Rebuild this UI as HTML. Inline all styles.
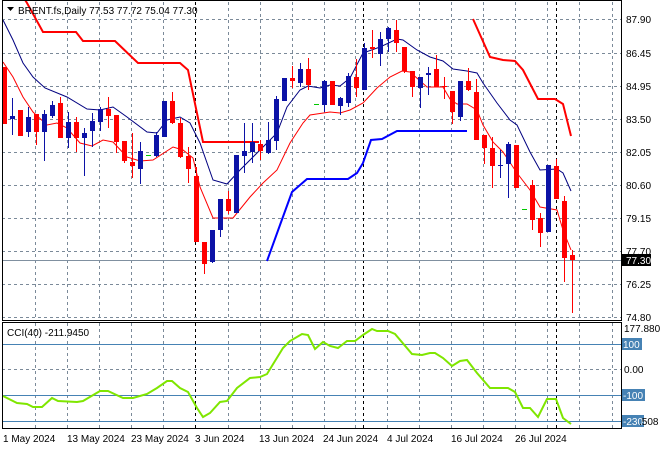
<!DOCTYPE html>
<html><head><meta charset="utf-8"><style>
html,body{margin:0;padding:0;background:#fff;width:660px;height:450px;overflow:hidden}
svg{display:block}
text{font-family:"Liberation Sans",sans-serif;font-size:10px;fill:#000}
</style></head><body>
<svg width="660" height="450" viewBox="0 0 660 450" xmlns="http://www.w3.org/2000/svg">
<rect width="660" height="450" fill="#fff"/>
<!-- grid -->
<g stroke="#7b8a99" stroke-width="1" stroke-dasharray="3,3" fill="none">
<path d="M2 19.5H621M2 53.5H621M2 86.5H621M2 119.5H621M2 152.5H621M2 185.5H621M2 218.5H621M2 251.5H621M2 284.5H621M2 317.5H621M2 369.5H621"/>
<path d="M35.5 2V320M67.5 2V320M99.5 2V320M131.5 2V320M163.5 2V320M228.5 2V320M260.5 2V320M292.5 2V320M324.5 2V320M355.5 2V320M387.5 2V320M419.5 2V320M451.5 2V320M483.5 2V320M515.5 2V320M547.5 2V320M579.5 2V320M612.5 2V320"/>
<path d="M35.5 323V428M67.5 323V428M99.5 323V428M131.5 323V428M163.5 323V428M228.5 323V428M260.5 323V428M292.5 323V428M324.5 323V428M355.5 323V428M387.5 323V428M419.5 323V428M451.5 323V428M483.5 323V428M515.5 323V428M547.5 323V428M579.5 323V428M612.5 323V428"/>
</g>
<g stroke="#000" stroke-width="1" stroke-dasharray="3,3">
<path d="M195.5 2V320M363.5 2V320M556.5 2V320M195.5 323V428M363.5 323V428M556.5 323V428"/>
</g>
<!-- current price line -->
<path d="M2 260.5H621" stroke="#8090a0" stroke-width="1"/>
<!-- CCI levels -->
<path d="M2 344.5H621M2 395.5H621M2 421.5H621" stroke="#4682b4" stroke-width="1"/>
<!-- thick red upper -->
<polyline fill="none" stroke="#f00" stroke-width="2" points="22,-5 27,3 43,32 76,32 83,41 115,41 138,63 180,63 188,70 203,142 259,142"/>
<polyline fill="none" stroke="#f00" stroke-width="2" points="473,19 490,57 503,60 515,61 523,70 538,99 555,99 563,104 571,136"/>
<!-- thick blue lower -->
<polyline fill="none" stroke="#0000ff" stroke-width="2" points="267,261 280,225 292,192 307,179 348,179 357,173 363,163 371,140 382,139 397,131 467,131"/>
<!-- navy MA -->
<polyline fill="none" stroke="#000080" stroke-width="1" points="3,20 13,40 23,63 33,77 45,88 67,97 87,109 100,110 113,107 127,117 147,132 157,133 167,120 180,117 190,123 200,143 213,180 227,184 240,170 263,147 277,133 287,107 300,90 308,86 320,88 330,85 340,86 350,78 363,53 380,47 397,39 403,40 417,50 430,57 443,61 453,69 467,71 477,73 483,83 497,103 510,120 517,125 530,152 540,170 557,169 563,173 571,191"/>
<!-- red thin MA -->
<polyline fill="none" stroke="#f00" stroke-width="1" points="3,62 13,77 23,97 33,112 47,125 57,123 67,128 80,143 92,146 103,140 113,142 127,157 140,161 153,160 173,147 183,150 193,158 200,187 213,218 233,218 250,197 263,183 277,170 290,143 303,123 310,115 330,112 340,113 350,110 363,103 377,88 390,77 402,71 410,72 427,87 443,87 450,99 457,104 467,104 477,110 483,125 493,142 503,152 517,173 530,190 540,207 557,210 563,230 571,250"/>
<!-- wicks -->
<path fill="none" stroke="#f00" stroke-width="1" d="M4.5 67V124M20.5 110V136M36.5 114V145M60.5 97V138M76.5 117V152M108.5 97V128M116.5 115V153M124.5 141V163M132.5 133V178M172.5 92V124M180.5 118V158M188.5 147V183M196.5 167V242M204.5 242V274M228.5 191V214M260.5 140V160M292.5 66V88M308.5 58V90M332.5 81V105M356.5 59V97M372.5 30V58M396.5 20V52M404.5 47V73M412.5 71V97M436.5 55V87M444.5 77V99M452.5 91V124M468.5 68V91M476.5 79V140M484.5 135V164M492.5 137V188M516.5 145V188M532.5 180V230M540.5 213V247M556.5 159V199M564.5 196V282M572.5 250V313"/>
<path fill="none" stroke="#0c12a6" stroke-width="1" d="M12.5 98V135M28.5 107V137M44.5 110V161M52.5 101V118M68.5 112V148M84.5 128V176M92.5 113V147M100.5 107V131M140.5 142V184M156.5 132V157M164.5 101V137M212.5 230V263M220.5 199V237M236.5 155V213M244.5 123V173M252.5 123V163M268.5 122V154M276.5 96V150M284.5 78V101M300.5 63V87M324.5 80V112M340.5 97V115M348.5 73V107M364.5 43V90M380.5 32V66M388.5 27V52M420.5 77V108M428.5 67V95M460.5 81V121M500.5 150V178M508.5 142V198M548.5 165V232"/>
<!-- bodies -->
<g fill="#f00">
<rect x="2" y="67" width="5" height="57"/><rect x="18" y="110" width="5" height="26"/><rect x="34" y="114" width="5" height="18"/><rect x="58" y="103" width="5" height="35"/><rect x="74" y="122" width="5" height="16"/><rect x="106" y="109" width="5" height="7"/><rect x="114" y="115" width="5" height="27"/><rect x="122" y="141" width="5" height="20"/><rect x="130" y="162" width="5" height="4"/><rect x="170" y="101" width="5" height="22"/><rect x="178" y="123" width="5" height="34"/><rect x="186" y="156" width="5" height="13"/><rect x="194" y="176" width="5" height="66"/><rect x="202" y="242" width="5" height="22"/><rect x="226" y="199" width="5" height="12"/><rect x="258" y="144" width="5" height="7"/><rect x="290" y="78" width="5" height="3"/><rect x="306" y="69" width="5" height="16"/><rect x="330" y="81" width="5" height="24"/><rect x="354" y="77" width="5" height="11"/><rect x="370" y="47" width="5" height="2"/><rect x="394" y="30" width="5" height="13"/><rect x="402" y="47" width="5" height="24"/><rect x="410" y="71" width="5" height="16"/><rect x="434" y="69" width="5" height="18"/><rect x="442" y="86" width="5" height="1"/><rect x="450" y="91" width="5" height="21"/><rect x="466" y="81" width="5" height="9"/><rect x="474" y="92" width="5" height="48"/><rect x="482" y="135" width="5" height="13"/><rect x="490" y="148" width="5" height="18"/><rect x="514" y="145" width="5" height="43"/><rect x="530" y="185" width="5" height="35"/><rect x="538" y="218" width="5" height="15"/><rect x="554" y="166" width="5" height="33"/><rect x="562" y="201" width="5" height="57"/><rect x="570" y="255" width="5" height="5"/>
</g>
<g fill="#0c12a6">
<rect x="10" y="116" width="5" height="3"/><rect x="26" y="117" width="5" height="15"/><rect x="42" y="114" width="5" height="18"/><rect x="50" y="105" width="5" height="11"/><rect x="66" y="122" width="5" height="16"/><rect x="82" y="133" width="5" height="5"/><rect x="90" y="121" width="5" height="10"/><rect x="98" y="109" width="5" height="13"/><rect x="138" y="151" width="5" height="18"/><rect x="154" y="135" width="5" height="21"/><rect x="162" y="101" width="5" height="36"/><rect x="210" y="230" width="5" height="32"/><rect x="218" y="199" width="5" height="31"/><rect x="234" y="155" width="5" height="58"/><rect x="242" y="151" width="5" height="5"/><rect x="250" y="142" width="5" height="10"/><rect x="266" y="140" width="5" height="13"/><rect x="274" y="99" width="5" height="42"/><rect x="282" y="78" width="5" height="23"/><rect x="298" y="69" width="5" height="14"/><rect x="322" y="81" width="5" height="24"/><rect x="338" y="98" width="5" height="8"/><rect x="346" y="76" width="5" height="27"/><rect x="362" y="48" width="5" height="42"/><rect x="378" y="39" width="5" height="15"/><rect x="386" y="28" width="5" height="11"/><rect x="418" y="77" width="5" height="11"/><rect x="426" y="73" width="5" height="2"/><rect x="458" y="81" width="5" height="36"/><rect x="498" y="165" width="5" height="1"/><rect x="506" y="144" width="5" height="20"/><rect x="546" y="165" width="5" height="67"/>
</g>
<path d="M146 155.5h5M314 104.5h5M522 209.5h5" stroke="#00c800" stroke-width="1"/>
<!-- CCI line -->
<polyline fill="none" stroke="#7fe600" stroke-width="2" points="3,396 17,403 27,404 33,407 42,407 52,398 58,401 77,402 83,401 100,391 108,391 123,398 133,398 147,394 157,388 167,381 172,381 180,388 188,392 197,408 203,417 210,413 220,402 227,401 237,388 250,378 260,377 267,374 283,348 290,341 302,334 308,335 315,349 323,342 330,346 338,348 347,341 355,341 363,335 372,329 377,331 388,331 395,334 412,354 422,355 430,353 435,353 443,358 452,366 460,361 467,360 477,373 490,388 508,388 515,392 523,408 530,408 538,417 547,399 556,399 563,418 571,424"/>
<!-- frames -->
<g fill="none" stroke="#000" stroke-width="1">
<rect x="2.5" y="0.5" width="619" height="320"/>
<rect x="2.5" y="322.5" width="619" height="106"/>
</g>
<!-- title -->
<path d="M7 7h7l-3.5 4z" fill="#000"/>
<text x="18" y="14">BRENT.fs,Daily  77.53 77.72 75.04 77.30</text>
<text x="7" y="336">CCI(40) -211.9450</text>
<!-- price axis -->
<g>
<text x="626" y="23">87.90</text><text x="626" y="57">86.45</text><text x="626" y="90">84.95</text><text x="626" y="123">83.50</text><text x="626" y="156">82.05</text><text x="626" y="189">80.60</text><text x="626" y="222">79.15</text><text x="626" y="255">77.70</text><text x="626" y="288">76.25</text><text x="626" y="321">74.80</text>
</g>
<rect x="622" y="254" width="29" height="12" fill="#000"/>
<text x="626" y="264" style="fill:#fff">77.30</text>
<text x="624" y="332">177.8808</text>
<rect x="622" y="338" width="20" height="12" fill="#4682b4"/><text x="623" y="348" style="fill:#fff">100</text>
<text x="624" y="373">0.00</text>
<rect x="622" y="389" width="23" height="12" fill="#4682b4"/><text x="623" y="399" style="fill:#fff">-100</text>
<rect x="622" y="415" width="22" height="12" fill="#4682b4"/><text x="623" y="425" style="fill:#fff">-230</text><text x="639" y="425">.508</text>
<!-- date axis -->
<g>
<text x="3" y="442">1 May 2024</text><text x="67" y="442">13 May 2024</text><text x="131" y="442">23 May 2024</text><text x="195" y="442">3 Jun 2024</text><text x="259" y="442">13 Jun 2024</text><text x="323" y="442">24 Jun 2024</text><text x="387" y="442">4 Jul 2024</text><text x="451" y="442">16 Jul 2024</text><text x="515" y="442">26 Jul 2024</text>
</g>
</svg>
</body></html>
